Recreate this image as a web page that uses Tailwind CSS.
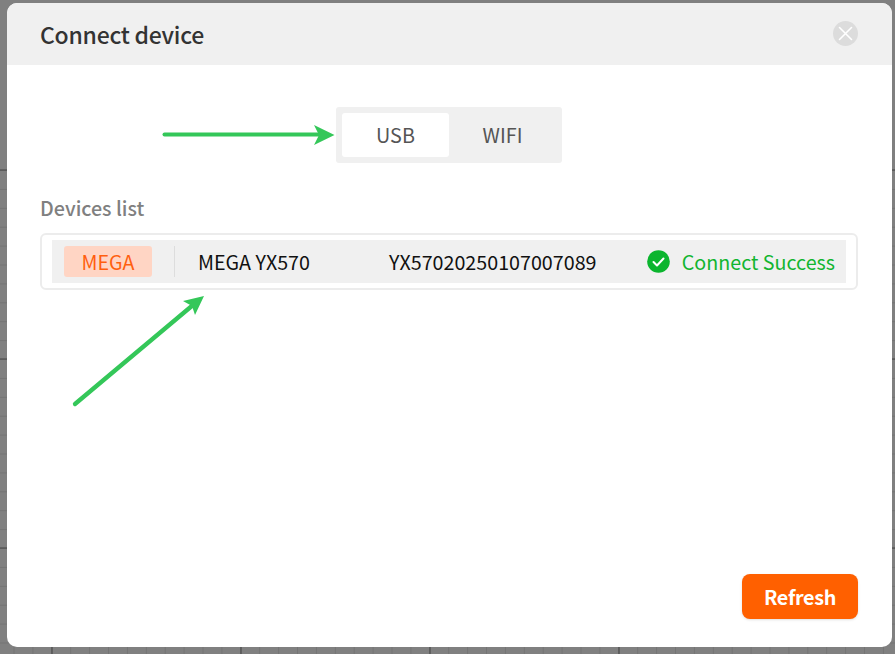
<!DOCTYPE html>
<html>
<head>
<meta charset="utf-8">
<script src="https://cdn.jsdelivr.net/npm/@tailwindcss/browser@4"></script>
</head>
<body class="w-[895px] h-[654px] overflow-hidden bg-[#808080] relative font-['Noto_Sans_CJK_SC','Noto_Sans',sans-serif]">
<svg class="absolute left-0 top-0" width="895" height="654" xmlns="http://www.w3.org/2000/svg">
  <defs>
    <pattern id="minorgrid" x="13.5" y="170" width="18.9" height="18.9" patternUnits="userSpaceOnUse">
      <path d="M0 0H18.9M0 0V18.9" stroke="#686868" stroke-width="1" fill="none"/>
    </pattern>
  </defs>
  <rect x="0" y="170" width="895" height="484" fill="url(#minorgrid)"/>
  <path d="M0 170H895M0 359H895M0 548H895M52 170V654M241 170V654M430 170V654M619 170V654" stroke="#444" stroke-width="1" fill="none"/>
</svg>
<div class="relative pt-[3px] pl-[7px]">
  <div class="w-[885px] h-[644px] bg-white rounded-[10px] flex flex-col overflow-hidden">
    <div class="h-[62px] shrink-0 bg-[#f0f0f0] flex items-center justify-between pl-[33px] pr-[34px]">
      <span class="text-[23px] leading-[32px] tracking-[-0.26px] font-medium text-[#333333]">Connect device</span>
      <span class="w-[25px] h-[25px] rounded-full bg-[#dcdcdc] flex items-center justify-center -mt-[1px]">
        <svg width="15" height="15" viewBox="0 0 15 15"><path d="M1.500 1.500L13.500 13.500M13.500 1.500L1.500 13.500" stroke="#fff" stroke-width="1.600" stroke-linecap="round"/></svg>
      </span>
    </div>
    <div class="flex-1 flex flex-col pl-[33px] pr-[34px] pt-[42px] pb-[28px]">
      <div class="self-start ml-[296px] w-[226px] h-[56px] p-[6px] bg-[#f0f0f0] rounded-[3px] flex text-[19.800px] text-[#555555]">
        <div class="w-[107px] bg-white rounded-[3px] flex items-center justify-center">USB</div>
        <div class="flex-1 flex items-center justify-center">WIFI</div>
      </div>
      <div class="mt-[31px] h-[28px] text-[19.700px] leading-[28px] font-medium text-[#808080]">Devices list</div>
      <div class="mt-[11px] h-[57px] border-2 border-[#ececec] rounded-[6px] px-[10px] py-[5px] flex">
        <div class="flex-1 h-[43px] bg-[#f0f0f0] flex items-center pl-[12px] pr-[11px] text-[19.700px]">
          <span class="w-[88px] h-[31px] rounded-[3px] bg-[#ffd5c4] text-[#ff5f0f] flex items-center justify-center">MEGA</span>
          <span class="ml-[22px] w-px h-[31px] bg-[#dddddd]"></span>
          <span class="ml-[23px] w-[191px] text-[#111111]">MEGA YX570</span>
          <span class="text-[#111111]">YX57020250107007089</span>
          <span class="ml-auto flex items-center gap-[12px] text-[#12b52f]">
            <svg width="23" height="23" viewBox="0 0 23 23"><circle cx="11.500" cy="11.500" r="11.300" fill="#0bb52e"/><path d="M6.500 12L10 15.500L16.500 8.500" stroke="#fff" stroke-width="2" fill="none" stroke-linecap="round" stroke-linejoin="round"/></svg>
            Connect Success
          </span>
        </div>
      </div>
      <div class="mt-auto self-end w-[116px] h-[45px] rounded-[8px] bg-[#ff6000] shadow-sm text-white text-[19.800px] font-bold tracking-[-0.3px] flex items-center justify-center">Refresh</div>
    </div>
  </div>
</div>
<svg class="absolute left-0 top-0 pointer-events-none" width="895" height="654" xmlns="http://www.w3.org/2000/svg">
  <path d="M164.500 134.500H322" stroke="#34c759" stroke-width="4" stroke-linecap="round" fill="none"/>
  <path d="M334.500 135L314 125L319 135L314 145Z" fill="#34c759"/>
  <path d="M75 404L193 305" stroke="#34c759" stroke-width="4.300" stroke-linecap="round" fill="none"/>
  <path d="M204 296L183 301L192 306L195 315Z" fill="#34c759"/>
</svg>
</body>
</html>
